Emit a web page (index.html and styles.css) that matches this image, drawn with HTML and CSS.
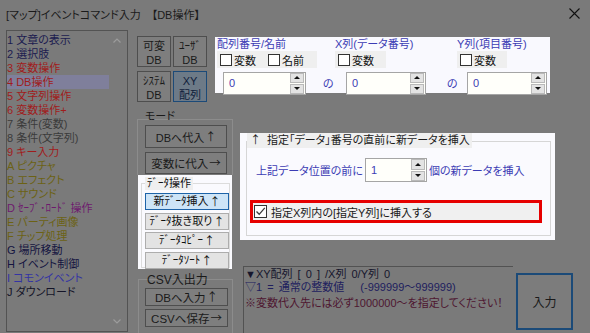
FILE: index.html
```html
<!DOCTYPE html>
<html lang="ja">
<head>
<meta charset="utf-8">
<title>DB操作</title>
<link rel="stylesheet" href="styles.css">
</head>
<body>
<div class="titlebar">
  <span class="title">[マップ]イベントコマンド入力　【DB操作】</span>
  <svg class="close" width="11" height="11" viewBox="0 0 11 11"><path d="M0.5 0.5 L10.5 10.5 M10.5 0.5 L0.5 10.5" stroke="#111" stroke-width="1.1" fill="none"/></svg>
</div>
<div class="main">
  <div class="list">
    <ul class="items">
      <li class="c-navy">1 文章の表示</li>
      <li class="c-navy">2 選択肢</li>
      <li class="c-red">3 変数操作</li>
      <li class="c-red sel">4 DB操作</li>
      <li class="c-red">5 文字列操作</li>
      <li class="c-red">6 変数操作+</li>
      <li class="c-gray">7 条件(変数)</li>
      <li class="c-gray">8 条件(文字列)</li>
      <li class="c-red">9 キー入力</li>
      <li class="c-olive">A ピクチャ</li>
      <li class="c-olive">B エフェクト</li>
      <li class="c-olive">C サウンド</li>
      <li class="c-purple">D ｾｰﾌﾞ･ﾛｰﾄﾞ 操作</li>
      <li class="c-olive">E パーティ画像</li>
      <li class="c-olive">F チップ処理</li>
      <li class="c-dnavy">G 場所移動</li>
      <li class="c-dnavy">H イベント制御</li>
      <li class="c-blue">I コモンイベント</li>
      <li class="c-black">J ダウンロード</li>
    </ul>
    <div class="scroll">
      <svg width="8" height="5" viewBox="0 0 8 5"><path d="M0.5 4.5 L4 1 L7.5 4.5" stroke="#9c9c9c" stroke-width="1.2" fill="none"/></svg>
      <svg width="8" height="5" viewBox="0 0 8 5"><path d="M0.5 0.5 L4 4 L7.5 0.5" stroke="#9c9c9c" stroke-width="1.2" fill="none"/></svg>
    </div>
  </div>

  <div class="content">
    <div class="toprow">
      <div class="types">
        <div class="tbtn"><span>可変</span><span>DB</span></div>
        <div class="tbtn"><span>ﾕｰｻﾞ</span><span>DB</span></div>
        <div class="tbtn"><span>ｼｽﾃﾑ</span><span>DB</span></div>
        <div class="tbtn on"><span>XY</span><span>配列</span></div>
      </div>
      <div class="dbpanel">
        <div class="dbl">
          <span>配列番号/名前</span>
          <span>X列(データ番号)</span>
          <span>Y列(項目番号)</span>
        </div>
        <div class="dbc">
          <div class="cbg w1"><i class="cb"></i><span class="cbl">変数</span><i class="cb cb2"></i><span class="cbl">名前</span></div>
          <div class="cbg w2"><i class="cb"></i><span class="cbl">変数</span></div>
          <div class="cbg w3"><i class="cb"></i><span class="cbl">変数</span></div>
        </div>
        <div class="dbi">
          <div class="spin s1"><span class="val">0</span><span class="btns"><span class="sb"><i class="up"></i></span><span class="sb"><i class="dn"></i></span></span></div>
          <span class="no n1">の</span>
          <div class="spin s2"><span class="val">0</span><span class="btns"><span class="sb"><i class="up"></i></span><span class="sb"><i class="dn"></i></span></span></div>
          <span class="no n2">の</span>
          <div class="spin s3"><span class="val">0</span><span class="btns"><span class="sb"><i class="up"></i></span><span class="sb"><i class="dn"></i></span></span></div>
        </div>
      </div>
    </div>

    <div class="lowrow">
      <div class="leftcol">
        <div class="group mode">
          <div class="legend">モード</div>
          <div class="mbtn m1">DBへ代入<span class="ar">↑</span></div>
          <div class="mbtn m2">変数に代入<span class="ar">→</span></div>
        </div>
        <div class="dataop">
          <div class="dgroup">
            <div class="dlegend">ﾃﾞｰﾀ操作</div>
            <div class="dbtn on">新ﾃﾞｰﾀ挿入<span class="ar">↑</span></div>
            <div class="dbtn">ﾃﾞｰﾀ抜き取り<span class="ar">↑</span></div>
            <div class="dbtn">ﾃﾞｰﾀｺﾋﾟｰ<span class="ar">↑</span></div>
            <div class="dbtn">ﾃﾞｰﾀｿｰﾄ<span class="ar">↑</span></div>
          </div>
        </div>
        <div class="group csv">
          <div class="legend big">CSV入出力</div>
          <div class="cbtn">DBへ入力<span class="ar">↑</span></div>
          <div class="cbtn">CSVへ保存<span class="ar">→</span></div>
        </div>
      </div>

      <div class="rightcol">
        <div class="insert">
          <div class="igroup">
            <div class="ilegend"><span class="ar">↑</span><span class="ilt">指定「データ」番号の直前に新データを挿入</span></div>
            <div class="irow">
              <span class="ilabel">上記データ位置の前に</span>
              <div class="spin s4"><span class="val">1</span><span class="btns"><span class="sb"><i class="up"></i></span><span class="sb"><i class="dn"></i></span></span></div>
              <span class="isuffix">個の新データを挿入</span>
            </div>
            <div class="redbox">
              <span class="chk"><svg width="11" height="11" viewBox="0 0 11 11"><path d="M1.5 5.5 L4.2 8.3 L9.8 1.8" stroke="#3a3a3a" stroke-width="1.3" fill="none"/></svg></span>
              <span class="rtext">指定X列内の[指定Y列]に挿入する</span>
            </div>
          </div>
        </div>
        <div class="inforow">
          <div class="info">
            <div class="l1">▼XY配列 [ 0 ] /X列 0/Y列 0</div>
            <div class="l2">▽1 = 通常の整数値　 (-999999～999999)</div>
            <div class="l3">※変数代入先には必ず1000000～を指定してください！</div>
          </div>
          <div class="enter">入力</div>
        </div>
      </div>
    </div>
  </div>
</div>
</body>
</html>
```

FILE: styles.css
```css
* { box-sizing: border-box; }
body {
  margin: 0;
  width: 590px;
  height: 333px;
  overflow: hidden;
  background: #7a7a7a;
  font-family: "Liberation Sans", "Noto Sans CJK JP", sans-serif;
  font-size: 11px;
  font-feature-settings: "palt";
  color: #1a1a1a;
}
.ar {
  font-family: "Noto Sans CJK JP", sans-serif;
  font-feature-settings: normal;
  line-height: 1;
  margin-left: 1px;
}
.titlebar {
  height: 30px;
  display: flex;
  align-items: center;
  justify-content: space-between;
  padding: 0 10px 1px 6px;
}
.title { font-size: 11px; color: #1a1a1a; line-height: 14px; }
.close { margin-bottom: 2px; }

.main { display: flex; padding-left: 6px; }

.list {
  width: 122px;
  height: 302px;
  border: 1px solid #535353;
  display: flex;
}
.items {
  list-style: none;
  margin: 0;
  padding: 2px 0 0 0;
  width: 102px;
}
.items li {
  height: 14px;
  line-height: 14px;
  white-space: nowrap;
  padding-left: 0;
}
.items li.sel { background: #7f7f9b; }
.c-navy { color: #1c1c50; }
.c-red { color: #a01c1c; }
.c-gray { color: #3a3a3a; }
.c-olive { color: #6c6214; }
.c-purple { color: #6e1a6e; }
.c-dnavy { color: #141440; }
.c-blue { color: #3434a4; }
.c-black { color: #141428; }
.scroll {
  flex: 1;
  display: flex;
  flex-direction: column;
  justify-content: space-between;
  align-items: center;
  padding: 7px 2px 7px 0;
}

.content { margin-left: 9px; display: flex; flex-direction: column; }
.toprow { display: flex; align-items: flex-start; margin-top: 6px; }
.types {
  display: grid;
  grid-template-columns: 34px 34px;
  grid-auto-rows: 31px;
  gap: 4px 2px;
}
.tbtn {
  border: 1px solid #4e4e4e;
  background: #7e7e7e;
  display: flex;
  flex-direction: column;
  align-items: center;
  justify-content: center;
  line-height: 14px;
  padding-top: 2px;
  color: #1a1a1a;
}
.tbtn.on { background: #6d7a87; border-color: #1c4a78; color: #10203a; }

.dbpanel {
  margin: 1px 0 0 8px;
  width: 335px;
  height: 56px;
  background: #f9f9fe;
  padding: 1px 0 0 2px;
}
.dbl {
  display: grid;
  grid-template-columns: 118px 122px auto;
  line-height: 13px;
  color: #3c3cb4;
}
.dbc {
  display: grid;
  grid-template-columns: 118px 122px auto;
  height: 17px;
}
.cbg {
  background: #efefef;
  display: flex;
  align-items: center;
  height: 17px;
  color: #111;
}
.w1 { width: 100px; }
.w2 { width: 51px; }
.w3 { width: 50px; }
.cb {
  width: 12px;
  height: 12px;
  border: 1px solid #333;
  background: #fff;
  margin-left: 3px;
}
.cb2 { margin-left: 12px; }
.cbl { margin-left: 2px; }
.dbi { display: flex; align-items: center; margin-top: 2px; }

.spin {
  display: flex;
  height: 23px;
  border: 1px solid #a5a5a5;
  background: #fffffa;
}
.spin .val {
  flex: 1;
  padding-left: 5px;
  line-height: 21px;
  color: #3c3cb4;
}
.spin .btns {
  width: 16px;
  display: flex;
  flex-direction: column;
  gap: 1px;
  padding: 0 1px 0 1px;
}
.sb {
  flex: 1;
  background: #e3e3e3;
  border: 1px solid #b9b9b9;
  display: flex;
  align-items: center;
  justify-content: center;
}
.up { width: 0; height: 0; border-left: 3px solid transparent; border-right: 3px solid transparent; border-bottom: 3px solid #111; }
.dn { width: 0; height: 0; border-left: 3px solid transparent; border-right: 3px solid transparent; border-top: 3px solid #111; }
.s1 { margin-left: 6px; width: 83px; }
.s2 { margin-left: 13px; width: 80px; }
.s3 { margin-left: 10px; width: 80px; }
.no { color: #3c3cb4; width: 10px; line-height: 23px; padding-top: 3px; }
.n1 { margin-left: 17px; }
.n2 { margin-left: 21px; }

.lowrow { display: flex; }
.leftcol { width: 96px; display: flex; flex-direction: column; }
.group {
  border: 1px solid #8c8c8c;
  border-bottom: none;
}
.legend {
  width: fit-content;
  line-height: 14px;
  height: 14px;
  padding: 0 2px 0 0;
  color: #1a1a1a;
}
.legend.big { font-size: 12px; }
.mode {
  margin-top: 17px;
  padding: 0 0 1px 7px;
}
.mode .legend { margin-top: -11px; }
.mbtn, .cbtn {
  border: 1px solid #4e4e4e;
  background: #7e7e7e;
  display: flex;
  align-items: center;
  justify-content: center;
  color: #1a1a1a;
}
.mbtn { width: 82px; }
.m1 { height: 23px; margin-top: 2px; }
.m2 { height: 22px; margin-top: 4px; font-size: 11.5px; }

.dataop {
  margin-left: 1px;
  width: 94px;
  height: 94px;
  background: #fafafe;
  padding: 8px 2px 0 3px;
}
.dgroup {
  border: 1px solid #dcdcdc;
  height: 85px;
  padding-left: 3px;
}
.dlegend {
  width: fit-content;
  margin-top: -7px;
  height: 13px;
  line-height: 13px;
  padding: 0 2px;
  background: #efefef;
  color: #111;
}
.dbtn {
  width: 84px;
  height: 17px;
  margin-top: 2.5px;
  border: 1px solid #adadad;
  background: #e3e3e3;
  display: flex;
  align-items: center;
  justify-content: center;
  color: #111;
  line-height: 15px;
}
.dbtn.on { margin-top: 3px; background: #cde4f7; border-color: #1d63a8; }

.csv {
  margin: 10px 0 0 1px;
  width: 95px;
  height: 60px;
  padding-left: 6px;
}
.csv .legend { margin-top: -7px; padding-left: 2px; }
.cbtn { width: 83px; height: 18px; margin-top: 3px; font-size: 11.5px; }
.csv .legend + .cbtn { margin-top: 1px; }

.rightcol { margin-left: 7px; display: flex; flex-direction: column; }
.insert {
  margin-top: 31px;
  width: 315px;
  height: 107px;
  background: #fafafe;
  padding: 8px 4px 0 6px;
}
.igroup {
  border: 1px solid #d6d6d6;
  height: 95px;
}
.ilegend {
  width: fit-content;
  margin-top: -9px;
  height: 15px;
  line-height: 15px;
  padding: 0 2px 0 3px;
  background: #efefef;
  color: #1a1a1a;
}
.ilegend .ar { margin-left: 0; }
.ilt { margin-left: 6px; }
.irow {
  display: flex;
  align-items: center;
  margin-top: 10px;
  height: 24px;
  color: #3c3cb4;
}
.ilabel { margin-left: 9px; width: 109px; }
.s4 { width: 62px; height: 24px; }
.s4 .val { color: #3c3cb4; line-height: 22px; }
.isuffix { margin-left: 2px; }
.redbox {
  margin: 18px 0 0 3px;
  width: 292px;
  height: 23px;
  border: 3px solid #e60000;
  background: #f0f0f0;
  display: flex;
  align-items: center;
}
.chk {
  width: 13px;
  height: 13px;
  margin-left: 1px;
  border: 1px solid #333;
  background: #fff;
  display: flex;
  align-items: center;
  justify-content: center;
}
.rtext { margin-left: 4px; color: #1a1a1a; }

.inforow { display: flex; margin-top: 26px; }
.info {
  margin-left: 3px;
  width: 270px;
  height: 67px;
  border-top: 1px solid #525252;
  border-left: 1px solid #525252;
  padding: 1px 0 0 1px;
  line-height: 13px;
  white-space: nowrap;
  word-spacing: 2px;
}
.l1 { color: #16162c; }
.l2 { color: #20205e; }
.l3 { color: #4e1630; margin-top: 3px; }
.enter {
  margin: 7px 0 0 3px;
  width: 57px;
  height: 57px;
  border: 2px solid #1b4a78;
  background: #7c7c7c;
  display: flex;
  align-items: center;
  justify-content: center;
  font-size: 12px;
  color: #1a1a1a;
}
```
